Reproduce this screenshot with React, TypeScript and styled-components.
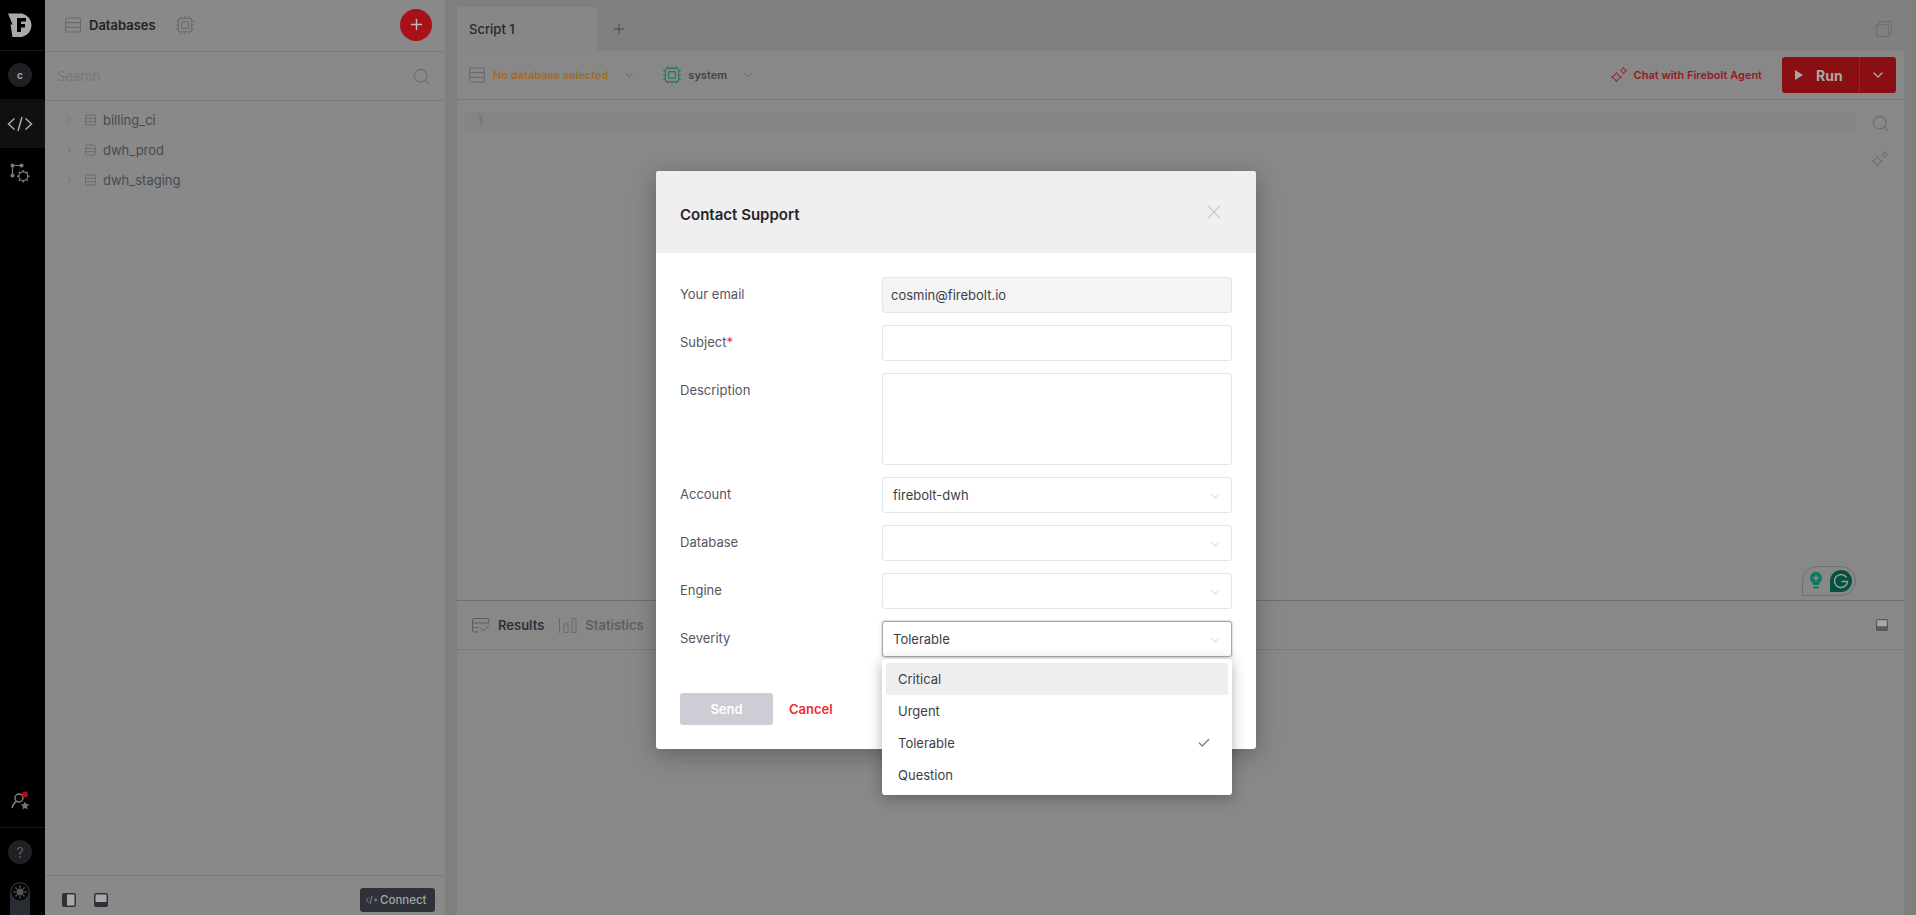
import React from "react";
import styled, { createGlobalStyle } from "styled-components";
import { Check, ChevronDown, ChevronRight, Cpu, Plus, Search, X } from "lucide-react";

const Global = createGlobalStyle`
  html, body { margin: 0; padding: 0; height: 100%; overflow: hidden; background: #808080; }
  * { box-sizing: border-box; }
  body { font-family: Inter, "Noto Sans", "Liberation Sans", sans-serif; }
`;

const Page = styled.div`
  position: relative;
  display: flex;
  width: 100vw;
  height: 100vh;
  overflow: hidden;
  background: #808080;
`;

/* ---------- left rail ---------- */
const Rail = styled.nav`
  width: 45px;
  flex: none;
  display: flex;
  flex-direction: column;
  align-items: stretch;
  background: #000;
`;
const RailCell = styled.div<{ $h: number; $active?: boolean; $line?: boolean }>`
  height: ${(p) => p.$h}px;
  flex: none;
  display: flex;
  align-items: center;
  justify-content: center;
  padding-right: 5px;
  color: #a4a4a4;
  background: ${(p) => (p.$active ? "#101010" : "transparent")};
  border-bottom: ${(p) => (p.$line ? "1px solid #1a1a1a" : "none")};
`;
const RailSpacer = styled.div`
  flex: 1;
`;
const Avatar = styled.div`
  width: 24px;
  height: 24px;
  border-radius: 50%;
  background: #1e2026;
  color: #9d9d9f;
  font-size: 10px;
  font-weight: 700;
  display: flex;
  align-items: center;
  justify-content: center;
`;
const Help = styled(Avatar)`
  color: #5d5e62;
  font-size: 14px;
  font-weight: 400;
`;
const ThemeToggle = styled.div`
  width: 20px;
  height: 33px;
  margin: 6px 0 0 10px;
  flex: none;
  border-radius: 10px 10px 0 0;
  background: #2a2c33;
  display: flex;
  justify-content: center;
  padding-top: 1px;
`;
const AlertIcon = styled.svg`
  margin-bottom: 6px;
`;

/* ---------- database panel ---------- */
const Panel = styled.aside`
  width: 400px;
  flex: none;
  display: flex;
  flex-direction: column;
  background: #898989;
`;
const PanelHead = styled.div`
  height: 52px;
  flex: none;
  display: flex;
  align-items: center;
  padding: 0 13px 2px 20px;
  border-bottom: 1px solid #7b7b7b;
`;
const PanelTitle = styled.div`
  margin-left: 8px;
  font-size: 13px;
  font-weight: 600;
  color: #212328;
`;
const HeadCpu = styled.div`
  margin-left: 19px;
  display: flex;
  color: #6b6b6d;
`;
const AddButton = styled.div`
  margin-left: auto;
  width: 32px;
  height: 32px;
  border-radius: 50%;
  background: #a81117;
  color: #bdbdbd;
  display: flex;
  align-items: center;
  justify-content: center;
`;
const SearchRow = styled.div`
  height: 49px;
  flex: none;
  display: flex;
  align-items: center;
  justify-content: space-between;
  padding: 0 14px 0 12px;
  border-bottom: 1px solid #7b7b7b;
  font-size: 13px;
  color: #767678;
`;
const SearchIcon = styled(Search)`
  color: #6c6c6e;
`;
const Tree = styled.div`
  flex: 1;
  padding-top: 4px;
`;
const TreeRow = styled.div`
  height: 30px;
  display: flex;
  align-items: center;
  padding-left: 18px;
  font-size: 13px;
  color: #48494f;
`;
const TreeChevron = styled(ChevronRight)`
  color: #6a6a6c;
  flex: none;
`;
const TreeDb = styled.svg`
  margin: 0 7px 0 10px;
  color: #6c6c70;
  flex: none;
`;
const PanelFoot = styled.div`
  height: 40px;
  flex: none;
  display: flex;
  align-items: center;
  padding: 8px 10px 0 17px;
  gap: 18px;
  border-top: 1px solid #7b7b7b;
`;
const ConnectButton = styled.div`
  margin-left: auto;
  width: 75px;
  height: 24px;
  border-radius: 3px;
  background: #30323a;
  color: #a6a6a9;
  font-size: 11.5px;
  font-weight: 500;
  display: flex;
  align-items: center;
  gap: 2px;
  padding-left: 6px;
`;
const Splitter = styled.div`
  width: 12px;
  flex: none;
  background: #7f7f7f;
`;

/* ---------- main column ---------- */
const Main = styled.main`
  flex: 1;
  min-width: 0;
  display: flex;
  flex-direction: column;
  background: #888;
`;
const TabBar = styled.div`
  height: 51px;
  flex: none;
  display: flex;
  align-items: flex-end;
  background: #808080;
  padding-right: 12px;
`;
const Tab = styled.div`
  width: 140px;
  height: 44px;
  padding: 0 12px;
  display: flex;
  align-items: center;
  background: #878787;
  font-size: 13px;
  font-weight: 500;
  color: #26282c;
`;
const AddTab = styled.div`
  height: 44px;
  margin-left: 14px;
  display: flex;
  align-items: center;
  color: #55565b;
`;
const WindowIcon = styled.svg`
  margin: 0 0 14px auto;
  color: #6f6f71;
`;
const Toolbar = styled.div`
  height: 49px;
  flex: none;
  display: flex;
  align-items: center;
  padding: 0 8px 0 12px;
  border-bottom: 1px solid #7b7b7b;
`;
const ToolText = styled.span<{ $warn?: boolean }>`
  margin-left: 8px;
  font-size: 11px;
  font-weight: 600;
  color: ${(p) => (p.$warn ? "#a46b1f" : "#42434a")};
`;
const ToolChevron = styled(ChevronDown)`
  margin-left: 14px;
  color: #5f5f64;
`;
const EngineCpu = styled.div`
  margin: 0 -2px 0 26px;
  display: flex;
  color: #2b7a5e;
`;
const AgentLink = styled.div`
  margin-left: auto;
  display: flex;
  align-items: center;
  gap: 6px;
  font-size: 11px;
  font-weight: 600;
  color: #97191f;
`;
const RunGroup = styled.div`
  margin-left: 20px;
  width: 114px;
  height: 36px;
  border-radius: 3px;
  display: flex;
  background: #8a0f13;
  color: #a7a7a7;
`;
const RunMain = styled.div`
  width: 78px;
  display: flex;
  align-items: center;
  padding-left: 13px;
  gap: 13px;
  border-right: 1px solid #9a2428;
  font-size: 14px;
  font-weight: 700;
`;
const RunMore = styled.div`
  flex: 1;
  display: flex;
  align-items: center;
  justify-content: center;
`;
const Editor = styled.div`
  flex: 1;
  display: flex;
  align-items: flex-start;
  padding: 12px 12px 0 8px;
  gap: 12px;
`;
const LineRow = styled.div`
  flex: 1;
  height: 18px;
  padding-left: 13px;
  background: #848484;
  color: #6e6e6e;
  font-size: 12px;
  line-height: 18px;
`;
const EditorTools = styled.div`
  width: 24px;
  margin-top: 2px;
  display: flex;
  flex-direction: column;
  align-items: center;
  gap: 17px;
  color: #6c6c6e;
`;
const ResultsBar = styled.div`
  height: 50px;
  flex: none;
  display: flex;
  align-items: center;
  padding: 0 16px 0 15px;
  border-top: 1px solid #6e6e6e;
  border-bottom: 1px solid #7b7b7b;
`;
const ResultTab = styled.div<{ $on?: boolean }>`
  display: flex;
  align-items: center;
  gap: 8px;
  margin-right: 15px;
  font-size: 13px;
  font-weight: 600;
  color: ${(p) => (p.$on ? "#2f3138" : "#5d5e64")};
`;
const ResultsBody = styled.div`
  height: 265px;
  flex: none;
`;
const PanelToggle = styled.svg`
  margin-left: auto;
`;
const RightStrip = styled.div`
  width: 12px;
  flex: none;
  background: #7f7f7f;
`;
const Grammarly = styled.div`
  position: absolute;
  left: 1802px;
  top: 566px;
  width: 54px;
  height: 30px;
  border: 1px solid #707070;
  border-radius: 15px 15px 15px 0;
  display: flex;
  align-items: center;
  justify-content: space-between;
  padding: 0 3px 0 7px;
`;

/* ---------- modal ---------- */
const Modal = styled.section`
  position: absolute;
  left: 656px;
  top: 171px;
  width: 600px;
  height: 578px;
  background: #fff;
  border-radius: 3px;
  box-shadow: 0 6px 24px rgba(0, 0, 0, 0.28);
`;
const ModalHead = styled.header`
  height: 82px;
  display: flex;
  align-items: center;
  justify-content: space-between;
  padding: 5px 24px 0;
  background: #efefef;
  border-radius: 3px 3px 0 0;
`;
const ModalTitle = styled.h2`
  margin: 0;
  font-size: 15px;
  font-weight: 600;
  color: #23252b;
`;
const CloseIcon = styled(X)`
  color: #c9cace;
  margin: -5px 7px 0 0;
`;
const Form = styled.form`
  padding: 24px 24px 0;
  display: flex;
  flex-direction: column;
  gap: 12px;
`;
const Row = styled.div`
  display: grid;
  grid-template-columns: 202px 350px;
`;
const Label = styled.label`
  font-size: 13px;
  line-height: 34px;
  color: #54565f;
`;
const Required = styled.span`
  color: #ef2b36;
`;
const Field = styled.div<{ $disabled?: boolean; $focus?: boolean; $tall?: boolean; $inset?: number }>`
  height: ${(p) => (p.$tall ? 92 : 36)}px;
  padding: 0 9px 0 ${(p) => p.$inset ?? 10}px;
  display: flex;
  align-items: center;
  justify-content: space-between;
  font-size: 13px;
  color: #3c3e46;
  background: ${(p) => (p.$disabled ? "#f5f5f6" : "#fff")};
  border: 1px solid ${(p) => (p.$focus ? "#a6a8ae" : "#e6e6ea")};
  border-radius: 3px;
  box-shadow: ${(p) =>
    p.$focus ? "0 0 0 1px #e2e2e6, 0 2px 6px rgba(0, 0, 0, 0.1)" : "none"};
`;
const SelectChevron = styled(ChevronDown)`
  color: #b4b5bd;
  flex: none;
  margin-top: 2px;
`;
const Actions = styled.div`
  display: flex;
  align-items: center;
  margin-top: 24px;
  gap: 16px;
`;
const SendButton = styled.div`
  width: 93px;
  height: 32px;
  border-radius: 3px;
  background: #cccdd5;
  color: #fff;
  font-size: 13px;
  font-weight: 600;
  display: flex;
  align-items: center;
  justify-content: center;
`;
const CancelLink = styled.div`
  font-size: 13px;
  font-weight: 600;
  color: #ef2b36;
`;
const Menu = styled.ul`
  position: absolute;
  left: 882px;
  top: 659px;
  width: 350px;
  margin: 0;
  padding: 4px;
  list-style: none;
  background: #fff;
  border-radius: 3px;
  box-shadow: 0 3px 14px rgba(0, 0, 0, 0.3);
`;
const MenuItem = styled.li<{ $hover?: boolean }>`
  height: 32px;
  padding: 0 17px 0 12px;
  display: flex;
  align-items: center;
  justify-content: space-between;
  font-size: 13px;
  color: #3c3e46;
  border-radius: 3px;
  background: ${(p) => (p.$hover ? "#eeeef0" : "transparent")};
`;
const MenuCheck = styled(Check)`
  color: #83848a;
`;

/* ---------- drawn icons ---------- */
const DbIcon = ({ c = "#6b6b6e" }: { c?: string }) => (
  <svg width="16" height="16" viewBox="0 0 16 16" fill="none" stroke={c} strokeWidth="1.1">
    <rect x="0.6" y="1" width="14.8" height="14" rx="1" />
    <path d="M0.6 5.6h14.8M0.6 10.4h14.8" />
  </svg>
);
const Sparkles = ({ c }: { c: string }) => (
  <svg width="18" height="18" viewBox="0 0 18 18" fill="none" stroke={c} strokeWidth="1" strokeLinejoin="round">
    <path d="M6.5 6.5 Q7.6 9.9 11.5 11 Q7.6 12.1 6.5 16 Q5.4 12.1 1.5 11 Q5.4 9.9 6.5 6.5Z" />
    <path d="M13.5 1.5 Q14.2 3.9 16.5 4.6 Q14.2 5.3 13.5 7.8 Q12.8 5.3 10.5 4.6 Q12.8 3.9 13.5 1.5Z" />
  </svg>
);
const DockIcon = ({ side }: { side: "left" | "bottom" }) => (
  <svg width="14" height="14" viewBox="0 0 14 14">
    <rect width="14" height="14" rx="2" fill="#2f3138" />
    {side === "left" ? (
      <rect x="5" y="1.5" width="7.5" height="11" fill="#a8a8a8" />
    ) : (
      <rect x="1.5" y="1.5" width="11" height="7.5" fill="#a8a8a8" />
    )}
  </svg>
);

const severities = ["Critical", "Urgent", "Tolerable", "Question"];

export default function App() {
  return (
    <Page>
      <Global />
      <Rail>
        <RailCell $h={51} $line>
          <svg width="26" height="26" viewBox="0 0 26 26">
            <path d="M1 1.5 H15 A12 12 0 0 1 15 25 H5.5 L3.5 12.5 H5.5 Z" fill="#a9a9a9" />
            <path d="M10 6 H19 V9.5 H14 V12 H18 V15.5 H14 V20 H10 Z" fill="#000" />
          </svg>
        </RailCell>
        <RailCell $h={48}>
          <Avatar>c</Avatar>
        </RailCell>
        <RailCell $h={49} $active>
          <svg width="26" height="20" viewBox="0 0 26 20" fill="none" stroke="#a9a9a9" strokeWidth="1.5">
            <path d="M7.5 4.5 L1.5 10 L7.5 15.5M18.5 4.5 L24.5 10 L18.5 15.5M15 3 L11 17" />
          </svg>
        </RailCell>
        <RailCell $h={49}>
          <svg width="20" height="20" viewBox="0 0 20 20" fill="none" stroke="#7b7b7b" strokeWidth="1.2">
            <circle cx="2.5" cy="2.5" r="1.5" fill="#7b7b7b" />
            <circle cx="11.5" cy="2.5" r="1.5" fill="#7b7b7b" />
            <circle cx="2.5" cy="12.5" r="1.5" fill="#7b7b7b" />
            <path d="M4 2.5h6M2.5 4v7" />
            <circle cx="13.3" cy="13.3" r="4.4" />
            <path
              d="M13.3 7v1.8M13.3 17.8v1.8M7 13.3h1.8M17.8 13.3h1.8M8.9 8.9l1.2 1.2M16.5 16.5l1.2 1.2M17.7 8.9l-1.2 1.2M10.1 16.5l-1.2 1.2"
              strokeWidth="1.6"
            />
          </svg>
        </RailCell>
        <RailSpacer />
        <RailCell $h={48} $line>
          <AlertIcon width="20" height="20" viewBox="0 0 20 20" fill="none">
            <circle cx="9" cy="7" r="4" stroke="#838383" strokeWidth="1.4" />
            <path d="M2 17 C3 13 4.5 11.5 6.5 10.5" stroke="#838383" strokeWidth="1.4" />
            <path
              d="M15 10.5 l1.3 2.6 2.9.4 -2.1 2 .5 2.9 -2.6-1.4 -2.6 1.4 .5-2.9 -2.1-2 2.9-.4z"
              fill="#747474"
            />
            <circle cx="15" cy="3.5" r="3" fill="#a81117" />
          </AlertIcon>
        </RailCell>
        <RailCell $h={48}>
          <Help>?</Help>
        </RailCell>
        <ThemeToggle>
          <svg width="18" height="18" viewBox="0 0 18 18">
            <circle cx="9" cy="9" r="8.5" fill="#050505" />
            <circle cx="9" cy="9" r="3.6" fill="#555557" />
            <path
              d="M9 2.5v2.2M9 13.3v2.2M2.5 9h2.2M13.3 9h2.2M4.4 4.4l1.6 1.6M12 12l1.6 1.6M13.6 4.4L12 6M6 12l-1.6 1.6"
              stroke="#555557"
              strokeWidth="1.4"
            />
          </svg>
        </ThemeToggle>
      </Rail>

      <Panel>
        <PanelHead>
          <DbIcon />
          <PanelTitle>Databases</PanelTitle>
          <HeadCpu>
            <Cpu size={20} strokeWidth={1.3} />
          </HeadCpu>
          <AddButton>
            <Plus size={17} strokeWidth={2} />
          </AddButton>
        </PanelHead>
        <SearchRow>
          <span>Search</span>
          <SearchIcon size={19} strokeWidth={1.4} />
        </SearchRow>
        <Tree>
          {["billing_ci", "dwh_prod", "dwh_staging"].map((name) => (
            <TreeRow key={name}>
              <TreeChevron size={12} strokeWidth={1.5} />
              <TreeDb width="11" height="12" viewBox="0 0 11 12" fill="none" stroke="currentColor" strokeWidth="1">
                <rect x="0.5" y="1" width="10" height="10" rx="1.5" />
                <path d="M0.5 4.3h10M0.5 7.7h10" />
              </TreeDb>
              {name}
            </TreeRow>
          ))}
        </Tree>
        <PanelFoot>
          <DockIcon side="left" />
          <DockIcon side="bottom" />
          <ConnectButton>
            <svg width="12" height="10" viewBox="0 0 12 10" fill="none" stroke="#8c8c90" strokeWidth="0.9">
              <path d="M2.5 2.5L0.5 5l2 2.5M6 1L4 9M8 5h3.5M9.8 3.2v3.6" />
            </svg>
            Connect
          </ConnectButton>
        </PanelFoot>
      </Panel>

      <Splitter />

      <Main>
        <TabBar>
          <Tab>Script 1</Tab>
          <AddTab>
            <Plus size={16} strokeWidth={2} />
          </AddTab>
          <WindowIcon width="16" height="16" viewBox="0 0 16 16" fill="none" stroke="currentColor" strokeWidth="1.2">
            <rect x="0.6" y="3.6" width="11.8" height="11.8" rx="1" />
            <path d="M3.6 3.5V0.6H15.4V12.4H12.5" />
          </WindowIcon>
        </TabBar>
        <Toolbar>
          <DbIcon />
          <ToolText $warn>No database selected</ToolText>
          <ToolChevron size={14} strokeWidth={1.4} />
          <EngineCpu>
            <Cpu size={20} strokeWidth={1.5} />
          </EngineCpu>
          <ToolText>system</ToolText>
          <ToolChevron size={14} strokeWidth={1.4} />
          <AgentLink>
            <Sparkles c="#97191f" />
            Chat with Firebolt Agent
          </AgentLink>
          <RunGroup>
            <RunMain>
              <svg width="8" height="10" viewBox="0 0 8 10">
                <path d="M0 0L8 5L0 10Z" fill="#a7a7a7" />
              </svg>
              Run
            </RunMain>
            <RunMore>
              <ChevronDown size={16} strokeWidth={2} />
            </RunMore>
          </RunGroup>
        </Toolbar>
        <Editor>
          <LineRow>1</LineRow>
          <EditorTools>
            <Search size={19} strokeWidth={1.4} />
            <Sparkles c="#6c6c6e" />
          </EditorTools>
        </Editor>
        <ResultsBar>
          <ResultTab $on>
            <svg width="18" height="15" viewBox="0 0 18 15" fill="none" stroke="#5d5e62" strokeWidth="1">
              <path d="M6 14H1.5A1 1 0 0 1 .5 13V2A1.5 1.5 0 0 1 2 .5H15A1.5 1.5 0 0 1 16.5 2V5H.5M.5 9.5H6M9 10l2.5 3L17 7.5" />
            </svg>
            Results
          </ResultTab>
          <ResultTab>
            <svg width="18" height="15" viewBox="0 0 18 15" fill="none" stroke="#6a6a6d" strokeWidth="1">
              <path d="M.5 0V15" />
              <rect x="5" y="6" width="4" height="8.5" />
              <rect x="13" y="0.5" width="4" height="14" />
            </svg>
            Statistics
          </ResultTab>
          <PanelToggle width="12" height="12" viewBox="0 0 12 12">
            <rect width="12" height="12" rx="1.5" fill="#5a5a5e" />
            <rect x="1.2" y="1.2" width="9.6" height="6" fill="#a8a8a8" />
          </PanelToggle>
        </ResultsBar>
        <ResultsBody />
      </Main>
      <RightStrip />

      <Grammarly>
        <svg width="12" height="18" viewBox="0 0 12 18">
          <path d="M6 0a6 6 0 0 1 3.4 10.9L9 13H3l-.4-2.1A6 6 0 0 1 6 0Z" fill="#0a7a63" />
          <path d="M6 2.5l1 2.5 2.5 1-2.5 1-1 2.5-1-2.5-2.5-1 2.5-1z" fill="#8a8a8a" />
          <rect x="3" y="14.5" width="6" height="2" rx="1" fill="#0a7a63" />
        </svg>
        <svg width="22" height="22" viewBox="0 0 22 22" fill="none">
          <path d="M0 22V11A11 11 0 1 1 11 22Z" fill="#05513f" />
          <path d="M16.5 7.5A6.5 6.5 0 1 0 17.5 11.5H11.5" stroke="#9a9a9a" strokeWidth="1.6" />
        </svg>
      </Grammarly>

      <Modal>
        <ModalHead>
          <ModalTitle>Contact Support</ModalTitle>
          <CloseIcon size={22} strokeWidth={1.4} />
        </ModalHead>
        <Form>
          <Row>
            <Label>Your email</Label>
            <Field $disabled $inset={8}>cosmin@firebolt.io</Field>
          </Row>
          <Row>
            <Label>
              Subject<Required>*</Required>
            </Label>
            <Field />
          </Row>
          <Row>
            <Label>Description</Label>
            <Field $tall />
          </Row>
          <Row>
            <Label>Account</Label>
            <Field>
              firebolt-dwh
              <SelectChevron size={14} strokeWidth={1.3} />
            </Field>
          </Row>
          <Row>
            <Label>Database</Label>
            <Field>
              <span />
              <SelectChevron size={14} strokeWidth={1.3} />
            </Field>
          </Row>
          <Row>
            <Label>Engine</Label>
            <Field>
              <span />
              <SelectChevron size={14} strokeWidth={1.3} />
            </Field>
          </Row>
          <Row>
            <Label>Severity</Label>
            <Field $focus>
              Tolerable
              <SelectChevron size={14} strokeWidth={1.3} />
            </Field>
          </Row>
          <Actions>
            <SendButton>Send</SendButton>
            <CancelLink>Cancel</CancelLink>
          </Actions>
        </Form>
      </Modal>

      <Menu>
        {severities.map((s) => (
          <MenuItem key={s} $hover={s === "Critical"}>
            {s}
            {s === "Tolerable" && <MenuCheck size={14} strokeWidth={2.5} />}
          </MenuItem>
        ))}
      </Menu>
    </Page>
  );
}
